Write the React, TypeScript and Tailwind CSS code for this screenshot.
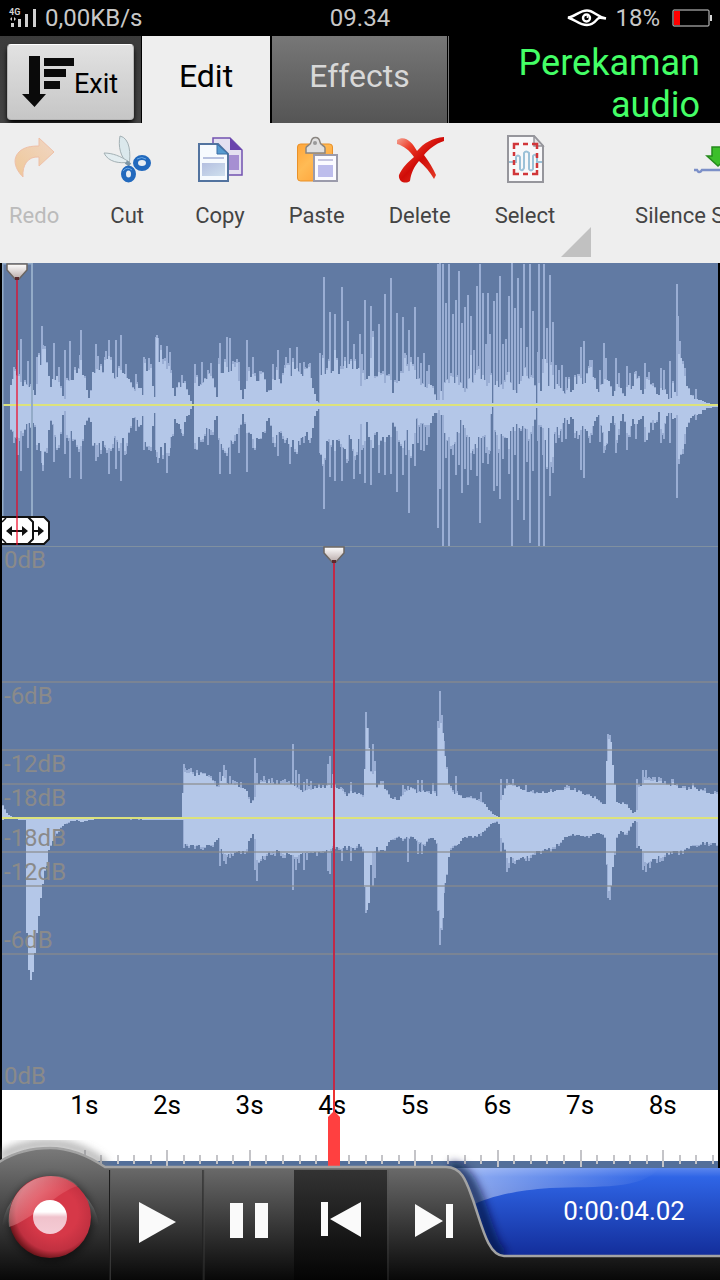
import type { ReactNode } from 'react'

type Sample = [x: number, up: number, down: number]

const WIDTH = 720

const OVERVIEW_BODY: Sample[] = [
  [2, 0, 0], [8, 0, 1], [10, 23, 20], [14, 30, 30], [17, 28, 28], [20, 20, 25], [27, 18, 20], [32, 16, 20],
  [34, 10, 16], [36, 25, 35], [38, 45, 42], [41, 48, 50], [44, 50, 45], [47, 35, 30], [50, 20, 15], [53, 28, 20],
  [56, 30, 38], [59, 18, 30], [62, 8, 10], [64, 6, 6], [66, 20, 25], [70, 26, 28], [74, 30, 32], [78, 34, 38],
  [81, 38, 35], [84, 22, 18], [88, 8, 10], [90, 14, 15], [92, 35, 36], [95, 38, 44], [99, 36, 36], [102, 30, 38],
  [105, 45, 34], [108, 50, 45], [111, 36, 35], [114, 24, 27], [118, 33, 36], [121, 35, 28], [124, 33, 38],
  [128, 28, 25], [131, 16, 15], [134, 12, 12], [137, 22, 20], [140, 16, 20], [142, 10, 10], [144, 36, 38],
  [149, 34, 42], [152, 22, 20], [154, 8, 8], [156, 60, 38], [158, 50, 52], [161, 42, 40], [165, 36, 46],
  [168, 34, 42], [171, 24, 28], [174, 10, 14], [177, 18, 22], [182, 22, 26], [186, 14, 12], [190, 3, 4],
  [192, 0, 1], [193, 25, 25], [196, 24, 42], [200, 20, 30], [204, 24, 26], [208, 28, 25], [212, 24, 22],
  [215, 10, 15], [217, 6, 8], [218, 35, 36], [222, 38, 40], [227, 38, 44], [231, 34, 32], [235, 40, 35],
  [238, 28, 26], [241, 12, 12], [243, 3, 6], [245, 28, 22], [250, 28, 30], [253, 25, 38], [258, 24, 32],
  [262, 30, 28], [266, 14, 14], [269, 12, 12], [272, 25, 28], [277, 30, 36], [280, 18, 22], [284, 32, 28],
  [287, 38, 44], [290, 30, 44], [293, 38, 38], [297, 34, 42], [301, 28, 38], [305, 35, 30], [310, 28, 38],
  [313, 12, 14], [316, 4, 5], [318, 2, 4], [319, 25, 40], [322, 40, 55], [325, 30, 46], [328, 40, 30],
  [331, 36, 38], [335, 48, 40], [338, 30, 30], [342, 30, 40], [345, 40, 50], [348, 40, 35], [352, 38, 42],
  [355, 40, 42], [358, 42, 36], [360, 18, 18], [363, 30, 40], [366, 28, 20], [369, 38, 38], [372, 55, 48],
  [374, 24, 25], [378, 30, 35], [382, 26, 34], [386, 26, 34], [390, 28, 34], [392, 12, 16], [395, 22, 20],
  [399, 24, 36], [403, 40, 34], [406, 36, 26], [410, 40, 48], [413, 34, 34], [416, 28, 12], [419, 20, 18],
  [423, 18, 16], [427, 14, 18], [430, 24, 20], [432, 14, 12], [435, 6, 8], [438, 4, 5], [439, 20, 14],
  [441, 5, 5], [443, 4, 12], [444, 20, 30], [448, 24, 36], [453, 24, 34], [458, 22, 30], [460, 20, 16],
  [464, 15, 26], [467, 14, 28], [470, 42, 48], [472, 20, 38], [476, 34, 38], [480, 28, 34], [484, 24, 26],
  [487, 22, 50], [490, 25, 10], [492, 2, 2], [493, 0, 0], [494, 22, 20], [498, 20, 36], [503, 18, 28],
  [508, 30, 36], [511, 15, 25], [516, 14, 20], [520, 25, 26], [524, 36, 22], [528, 26, 28], [531, 24, 22],
  [534, 18, 12], [536, 2, 3], [538, 22, 20], [541, 10, 15], [543, 48, 28], [546, 50, 58], [548, 18, 24],
  [551, 42, 60], [554, 16, 22], [557, 22, 26], [561, 18, 20], [565, 8, 12], [568, 22, 18], [571, 10, 8],
  [573, 24, 22], [578, 26, 30], [583, 22, 20], [587, 30, 28], [591, 38, 26], [595, 18, 15], [598, 12, 12],
  [601, 22, 20], [605, 28, 40], [609, 20, 22], [613, 8, 8], [616, 22, 30], [619, 20, 20], [623, 6, 8],
  [627, 20, 28], [631, 18, 16], [635, 28, 20], [639, 20, 15], [643, 8, 10], [646, 24, 34], [650, 18, 16],
  [654, 14, 18], [658, 8, 8], [661, 18, 26], [665, 12, 14], [669, 4, 5], [672, 18, 16], [676, 8, 10],
  [677, 60, 42], [680, 50, 48], [683, 28, 30], [688, 14, 16], [693, 6, 8], [700, 5, 8], [705, 2, 3],
  [712, 1, 2], [718, 1, 2],
]

const OVERVIEW_PEAKS: Sample[] = [
  [3, 0, 85], [14, 38, 38], [18, 55, 50], [21, 66, 66], [28, 44, 43], [37, 48, 45], [42, 79, 58], [43, 58, 63],
  [54, 62, 57], [59, 38, 37], [65, 55, 49], [70, 64, 73], [75, 37, 33], [80, 50, 40], [81, 75, 74], [96, 61, 56],
  [98, 49, 52], [106, 54, 43], [109, 65, 69], [116, 65, 64], [121, 70, 76], [126, 41, 49], [136, 31, 26],
  [144, 48, 45], [149, 47, 45], [156, 68, 45], [158, 67, 58], [163, 46, 46], [167, 59, 68], [170, 53, 43],
  [182, 30, 28], [195, 41, 44], [202, 43, 28], [208, 35, 40], [211, 42, 30], [219, 47, 35], [220, 62, 69],
  [227, 68, 48], [230, 67, 69], [235, 43, 36], [239, 43, 48], [247, 65, 67], [253, 48, 43], [260, 34, 27],
  [273, 41, 38], [278, 55, 51], [286, 48, 35], [290, 57, 59], [297, 58, 43], [300, 42, 40], [304, 43, 38],
  [310, 42, 38], [320, 52, 48], [324, 128, 104], [330, 93, 72], [335, 91, 76], [342, 118, 76], [348, 84, 56],
  [354, 61, 74], [360, 71, 69], [362, 51, 45], [365, 105, 78], [371, 99, 80], [379, 81, 68], [385, 111, 70],
  [391, 127, 69], [397, 92, 87], [403, 88, 70], [406, 50, 50], [409, 75, 108], [411, 48, 50], [415, 98, 61],
  [418, 48, 38], [421, 42, 45], [424, 52, 46], [427, 34, 40], [429, 40, 32], [438, 141, 123], [440, 142, 84],
  [443, 141, 141], [446, 102, 53], [449, 141, 141], [453, 91, 50], [456, 105, 70], [459, 134, 60], [462, 82, 88],
  [465, 98, 64], [468, 110, 80], [471, 89, 65], [474, 55, 49], [477, 119, 71], [480, 141, 118], [483, 112, 58],
  [486, 61, 48], [488, 112, 59], [490, 71, 46], [494, 104, 86], [497, 112, 81], [500, 129, 94], [503, 61, 54],
  [506, 66, 33], [509, 109, 69], [512, 142, 142], [515, 97, 50], [518, 127, 95], [521, 77, 26], [524, 141, 115],
  [527, 58, 57], [530, 141, 138], [533, 94, 66], [538, 53, 36], [539, 141, 141], [543, 46, 50], [544, 141, 141],
  [547, 77, 55], [550, 130, 91], [553, 83, 68], [556, 40, 38], [559, 35, 33], [562, 40, 37], [566, 28, 34],
  [575, 28, 33], [578, 31, 34], [581, 58, 65], [584, 64, 73], [590, 45, 38], [592, 45, 30], [600, 35, 37],
  [604, 62, 48], [606, 47, 40], [616, 47, 48], [619, 32, 30], [627, 39, 45], [630, 32, 32], [636, 34, 34],
  [645, 42, 37], [649, 33, 20], [653, 22, 25], [661, 37, 38], [664, 35, 34], [670, 44, 38], [677, 121, 93],
  [678, 89, 50], [680, 64, 45], [685, 37, 39], [696, 16, 15],
]

const DETAIL_BODY: Sample[] = [
  [2, 12, 2], [4, 8, 1], [7, 3, 1], [12, 1, 1], [24, 1, 2], [25, 1, 80], [26, 1, 115], [28, 1, 152], [29, 1, 160],
  [31, 1, 163], [33, 1, 145], [36, 1, 115], [40, 1, 80], [44, 1, 52], [48, 1, 32], [54, 1, 18], [60, 1, 9],
  [68, 1, 4], [76, 1, 2], [80, 1, 4], [88, 1, 2], [100, 1, 1], [181, 1, 2], [182, 25, 2], [184, 44, 26],
  [190, 44, 27], [195, 43, 27], [200, 45, 28], [206, 42, 28], [211, 38, 26], [215, 32, 24], [218, 30, 20],
  [219, 30, 28], [221, 45, 34], [226, 35, 36], [232, 34, 35], [238, 32, 34], [243, 30, 33], [246, 28, 30],
  [248, 18, 23], [250, 15, 20], [253, 17, 15], [254, 20, 20], [255, 33, 40], [257, 34, 45], [262, 35, 38],
  [268, 36, 34], [275, 34, 33], [284, 34, 35], [292, 34, 38], [296, 30, 38], [302, 26, 36], [308, 28, 35],
  [315, 30, 34], [322, 30, 33], [328, 32, 32], [333, 30, 28], [340, 28, 30], [345, 22, 28], [350, 26, 30],
  [355, 24, 28], [358, 26, 26], [362, 20, 30], [363, 40, 60], [365, 60, 78], [366, 90, 92], [368, 70, 85],
  [369, 50, 60], [371, 40, 36], [374, 46, 32], [376, 30, 30], [380, 34, 32], [383, 32, 33], [386, 26, 28],
  [390, 20, 22], [394, 18, 20], [398, 18, 18], [401, 22, 20], [405, 26, 20], [410, 30, 18], [417, 25, 22],
  [423, 26, 26], [428, 24, 20], [432, 26, 20], [436, 22, 25], [437, 48, 65], [438, 90, 92], [440, 95, 110],
  [442, 85, 100], [444, 62, 65], [447, 40, 50], [449, 30, 30], [453, 24, 26], [457, 24, 28], [462, 20, 20],
  [468, 20, 18], [475, 18, 18], [480, 16, 15], [484, 14, 12], [488, 8, 8], [492, 4, 5], [497, 1, 3], [499, 2, 8],
  [500, 18, 20], [503, 26, 26], [507, 33, 45], [510, 32, 40], [516, 32, 42], [522, 28, 40], [528, 26, 38],
  [533, 24, 34], [540, 25, 32], [550, 26, 30], [558, 28, 25], [565, 29, 19], [573, 28, 16], [580, 25, 18],
  [588, 22, 18], [595, 20, 16], [601, 14, 15], [604, 14, 18], [605, 40, 20], [607, 75, 70], [609, 82, 75],
  [611, 70, 60], [613, 40, 40], [616, 16, 18], [620, 14, 13], [625, 14, 16], [629, 9, 10], [633, 4, 3],
  [636, 8, 4], [638, 30, 28], [641, 34, 32], [645, 38, 46], [650, 36, 42], [656, 36, 40], [661, 36, 38],
  [666, 32, 36], [672, 34, 34], [680, 30, 32], [687, 28, 30], [692, 31, 26], [698, 28, 26], [705, 26, 24],
  [712, 24, 25], [718, 23, 27],
]

const DETAIL_PEAKS: Sample[] = [
  [184, 54, 30], [187, 48, 28], [189, 49, 24], [201, 46, 29], [220, 46, 48], [224, 53, 43], [226, 48, 46],
  [230, 42, 40], [235, 37, 35], [241, 36, 35], [255, 60, 52], [257, 45, 63], [264, 42, 41], [272, 40, 37],
  [285, 39, 40], [293, 74, 72], [296, 48, 52], [299, 44, 45], [304, 36, 52], [307, 39, 42], [311, 37, 35],
  [328, 54, 53], [330, 62, 56], [333, 44, 30], [342, 30, 43], [351, 36, 43], [366, 106, 95], [368, 90, 80],
  [373, 74, 68], [375, 57, 60], [381, 37, 30], [403, 33, 20], [408, 32, 44], [418, 38, 36], [422, 38, 36],
  [433, 35, 20], [438, 97, 93], [440, 127, 127], [442, 103, 112], [444, 77, 75], [447, 48, 50], [456, 42, 28],
  [481, 26, 18], [501, 39, 34], [507, 39, 54], [513, 39, 45], [526, 33, 43], [608, 84, 80], [610, 83, 82],
  [637, 39, 30], [643, 48, 52], [646, 48, 54], [650, 40, 50], [660, 40, 44], [672, 39, 36],
]

const DB_LINES = [136, 204, 238, 306, 340, 408]

const DB_LABELS = [
  { top: 2, label: '0dB' },
  { top: 138, label: '-6dB' },
  { top: 206, label: '-12dB' },
  { top: 240, label: '-18dB' },
  { top: 280, label: '-18dB' },
  { top: 314, label: '-12dB' },
  { top: 382, label: '-6dB' },
  { top: 518, label: '0dB' },
]

const SECONDS = ['1s', '2s', '3s', '4s', '5s', '6s', '7s', '8s']

// Repeatable noise in 0..1, so that the wave keeps its shape between renders
function noise(n: number) {
  const v = Math.sin(n * 127.1) * 43758.5453
  return v - Math.floor(v)
}

function jitter(height: number, spread: number, seed: number) {
  return Math.round(height + (height > 60 ? 0 : height) * spread * (noise(seed) - 0.4))
}

// One column every two pixels, mirrored round the mid line
function wavePath(samples: Sample[], mid: number, spread: number) {
  let upper = ''
  let lower = ''
  let i = 0
  for (let x = 2; x < WIDTH - 2; x += 2) {
    while (i < samples.length - 2 && samples[i + 1][0] <= x) i++
    const [x0, u0, d0] = samples[i]
    const [x1, u1, d1] = samples[i + 1]
    const t = Math.min(1, Math.max(0, (x - x0) / (x1 - x0)))
    const top = mid - jitter(u0 + (u1 - u0) * t, spread, x)
    const bottom = mid + jitter(d0 + (d1 - d0) * t, spread, x + 999)
    upper += `L${x} ${top}H${x + 2}`
    lower = `L${x + 2} ${bottom}H${x}` + lower
  }
  return `M2 ${mid}${upper}${lower}Z`
}

function peakPath(samples: Sample[], mid: number) {
  return samples.map(([x, up, down]) => `M${x - 1} ${mid - up}h2V${mid + down}h-2Z`).join('')
}

type WaveProps = { body: Sample[]; peaks: Sample[]; mid: number; rough: number; inner: number }

function Wave({ body, peaks, mid, rough, inner }: WaveProps) {
  return (
    <g shapeRendering="crispEdges">
      <path d={wavePath(body, mid, rough)} fill="#9aaed4" />
      <path d={peakPath(peaks, mid)} fill="#9aaed4" />
      <path d={wavePath(body, mid, inner)} fill="#b4c7e8" />
      <rect x="2" y={mid - 1} width="716" height="2" fill="#dce27c" />
    </g>
  )
}

function MarkerHead({ x, y }: { x: number; y: number }) {
  return (
    <g transform={`translate(${x} ${y})`}>
      <path d="M-10 1H10V7L2 16H-2L-10 7Z" fill="url(#marker)" stroke="#6b6663" strokeWidth="1.5" />
      <path d="M-2 14H2V17H-2Z" fill="#5b2a2e" />
    </g>
  )
}

function StatusBar() {
  return (
    <div className="flex h-9 items-center bg-black px-2 text-2xl text-[#c8c8c8]">
      <div className="flex flex-1 items-center gap-2">
        <svg width="29" height="20" viewBox="0 0 29 20" fill="#d0d0d0" aria-hidden="true">
          <text x="1" y="7" fontSize="9" fontWeight="700" fontFamily="Roboto">4G</text>
          <path d="M3 15h3v4H3zM10 11h3v8h-3zM17 6h3v13h-3zM25 1h3v18h-3z" />
          <path d="M2 11l2-2v4zM6 9l2 2-2 2z" />
        </svg>
        <span>0,00KB/s</span>
      </div>
      <span>09.34</span>
      <div className="flex flex-1 items-center justify-end gap-2">
        <svg width="40" height="18" viewBox="0 0 40 18" fill="none" stroke="#fff" strokeWidth="2.4" aria-hidden="true">
          <path d="M1 8.500C8 8 12 1.500 20 1.500c7 0 9 6 19 8-6-1-7-1-8.500.5C28 13 25 16 20 16 12 16 9 11 1 8.500z" />
          <circle cx="19.500" cy="9" r="3.500" />
          <circle cx="20.500" cy="8" r="1" fill="#fff" stroke="none" />
        </svg>
        <span>18%</span>
        <svg className="ml-1" width="40" height="18" viewBox="0 0 40 18" aria-hidden="true">
          <rect x="1" y="1" width="36" height="16" rx="1" fill="none" stroke="#d6d6d6" />
          <path d="M38 6h2v6h-2z" fill="#d6d6d6" />
          <path d="M2 2h6v14H2z" fill="#f00" />
        </svg>
      </div>
    </div>
  )
}

function Header() {
  return (
    <header className="flex h-[87px] bg-black">
      <div className="w-[141px] bg-linear-to-b from-[#3b3b3b] to-[#454545] px-[7px] pt-2">
        <button className="flex h-[76px] w-full items-center rounded-sm border border-[#b5b5b5] border-t-white bg-linear-to-b from-[#e2e2e2] to-[#c6c6c6] pl-3.5 text-[27px] text-black shadow-md shadow-black">
          <svg width="52" height="54" viewBox="0 0 52 54" aria-hidden="true">
            <path d="M7 1h11v38h6L12.500 52 0 39h7zM22 3h30v8H22zM22 14h22v8H22zM22 26h16v8H22z" fill="#0a0a0a" />
          </svg>
          <span className="pt-1">Exit</span>
        </button>
      </div>
      <nav className="flex pl-px text-[32px]">
        <button className="w-32 bg-[#eee] pb-2 text-black">Edit</button>
        <button className="ml-0.5 w-[175px] bg-linear-to-b from-[#777] to-[#555] pb-2 text-[#d8d8d8]">Effects</button>
        <div className="ml-px w-px bg-[#777]" />
      </nav>
      <h1 className="ml-auto w-60 pt-1.5 pr-5 text-right text-4xl leading-[42px] text-[#4f6]">Perekaman audio</h1>
    </header>
  )
}

function RedoIcon() {
  return (
    <svg width="48" height="48" viewBox="0 0 48 48" fill="url(#redo)" stroke="#eec0a8" strokeWidth="1" aria-hidden="true">
      <path d="M29 3L44 17 29 31V22C18 21 12 30 13 42 5 34 2 24 9 17c5-5 12-6 20-6z" />
    </svg>
  )
}

function CutIcon() {
  return (
    <svg width="48" height="48" viewBox="0 0 48 48" aria-hidden="true">
      <path d="M17 1c10 2 11 18 9 29C17 22 15 11 17 1z" fill="#dbe8ec" stroke="#a3b0b4" />
      <path d="M1 18c8 0 17 3 25 9-9 2-21 0-25-9z" fill="#e3edf0" stroke="#a3b0b4" />
      <path d="M23 27l4 3" stroke="#7d96a5" strokeWidth="4" />
      <ellipse cx="39" cy="28" rx="6.500" ry="5.500" fill="#e8edf2" stroke="#2269bd" strokeWidth="5" />
      <ellipse cx="25.500" cy="39" rx="5" ry="6" fill="#e8edf2" stroke="#2269bd" strokeWidth="5" />
      <path d="M34 24q5-3 9 0M20 36q4-5 9-1" fill="none" stroke="#67a7e5" />
    </svg>
  )
}

function CopyIcon() {
  return (
    <svg width="48" height="48" viewBox="0 0 48 48" aria-hidden="true">
      <path d="M17 3H34L46 15V40H17z" fill="#e4e0f0" stroke="#7151b0" strokeWidth="1.500" />
      <path d="M33 20h10v15H33z" fill="#a68fd2" />
      <path d="M34 3V15H46z" fill="#6a43ad" />
      <path d="M3 9H22L32 19V46H3z" fill="#f6fafe" stroke="#52739f" strokeWidth="2" />
      <path d="M6 28h23v13H6z" fill="url(#sheet)" />
      <path d="M7 23h21" stroke="#b7c1df" strokeWidth="2" />
      <path d="M21 9v10h11z" fill="#569bd0" stroke="#3d6ea5" />
    </svg>
  )
}

function PasteIcon() {
  return (
    <svg width="48" height="48" viewBox="0 0 48 48" aria-hidden="true">
      <rect x="4.500" y="9" width="35" height="37" rx="3" fill="url(#board)" stroke="#e99128" />
      <path d="M13 18v-5c0-3 5-2 5-6 1-6 8-6 9 0 0 4 5 3 5 6v5z" fill="#e0e0e0" stroke="#8a8580" strokeWidth="1.500" />
      <circle cx="22" cy="8" r="2" fill="#999" />
      <path d="M21 20H44V46H21z" fill="#fbfbff" stroke="#9b9bab" strokeWidth="2" />
      <path d="M25 25h15" stroke="#c7c7e0" strokeWidth="2" />
      <path d="M25 30h15v12H25z" fill="#bdbdec" />
    </svg>
  )
}

function DeleteIcon() {
  return (
    <svg width="48" height="48" viewBox="0 0 48 48" aria-hidden="true">
      <path d="M1 5C9 0 16 7 21 16 28 8 36 3 48 2v4C39 9 33 14 28 20c5 7 9 13 12 20l-2 4C34 37 29 31 23 26c-5 6-8 12-9 20-5 4-12 0-11-6 3-7 9-13 15-18C13 15 8 11 1 9z" fill="url(#cross)" />
    </svg>
  )
}

function SelectIcon() {
  return (
    <svg width="48" height="48" viewBox="0 0 48 48" fill="none" aria-hidden="true">
      <path d="M7 1H33L42 11V47H7z" fill="#f8f8fa" stroke="#96969c" strokeWidth="2" />
      <path d="M33 1V11H42z" fill="#e2e2e4" stroke="#96969c" strokeWidth="1.500" />
      <path d="M8 27h7v-5q2-3 4 0v12q2 3 4-1V18q2-3 5 0v16q2 3 4 0V21q2-3 4 1v5h5" stroke="#9cc1d8" strokeWidth="2" />
      <path d="M13 14V9h5M22 9h5M31 9h5v5M36 18v5M36 28v5M36 35v4h-5M27 39h-5M18 39h-5v-5M13 30v-5M13 21v-4" stroke="#d1363b" strokeWidth="2.500" />
    </svg>
  )
}

function SilenceIcon() {
  return (
    <svg width="48" height="48" viewBox="0 0 48 48" aria-hidden="true">
      <path d="M0 35h3q2 4 5 0h40" fill="none" stroke="#7c90c8" strokeWidth="2.500" />
      <path d="M18 12h12v9h5L24 31 13 21h5z" fill="#3cbf2a" stroke="#258a1c" strokeWidth="1.500" />
    </svg>
  )
}

function Tool({ label, icon, disabled = false }: { label: string; icon: ReactNode; disabled?: boolean }) {
  return (
    <button
      disabled={disabled}
      className="flex shrink-0 flex-col items-center gap-[17px] px-[22px] pt-3 text-[22px] leading-8 whitespace-nowrap text-[#444] disabled:text-[#bbb]"
    >
      {icon}
      {label}
    </button>
  )
}

function Toolbar() {
  return (
    <div className="flex h-35 overflow-hidden bg-[#eee]">
      <div className="-ml-[13px] flex">
        <Tool label="Redo" icon={<RedoIcon />} disabled />
        <Tool label="Cut" icon={<CutIcon />} />
        <Tool label="Copy" icon={<CopyIcon />} />
        <Tool label="Paste" icon={<PasteIcon />} />
        <Tool label="Delete" icon={<DeleteIcon />} />
        <Tool label="Select" icon={<SelectIcon />} />
        <svg className="-ml-4 mb-1.5 shrink-0 self-end" width="30" height="30" viewBox="0 0 30 30" aria-hidden="true">
          <path d="M30 0V30H0z" fill="#c1c1c1" />
        </svg>
        <div className="ml-[22px] flex">
          <Tool label="Silence Selection" icon={<SilenceIcon />} />
        </div>
      </div>
    </div>
  )
}

function Overview() {
  return (
    <svg className="block h-[283px] w-full bg-[#617aa3]" viewBox="2 0 716 283" preserveAspectRatio="none">
      <Wave body={OVERVIEW_BODY} peaks={OVERVIEW_PEAKS} mid={142} rough={0.6} inner={0.4} />
      <path d="M2.500 0V253M2 .5H32M32 0V253" stroke="#93abc8" strokeWidth="2" fill="none" />
      <g stroke="#111" strokeWidth="2">
        <path d="M20 254H44L49 259V276L44 281H20z" fill="#fff" />
        <path d="M34 268h5" />
        <path d="M38 263l6 5-6 5z" fill="#111" stroke="none" />
        <path d="M0 254H28L33 259V276L28 281H0z" fill="#fff" />
        <path d="M2 259l4-4M2 276l4 4" strokeWidth="1.500" />
        <path d="M9 268h16" />
        <path d="M12 263v10l-6-5zM22 263v10l6-5z" fill="#111" stroke="none" />
      </g>
      <path d="M17 15V282" stroke="#f00020" strokeOpacity=".6" strokeWidth="2" />
      <MarkerHead x={17} y={0} />
    </svg>
  )
}

function Detail() {
  return (
    <div className="relative">
      <svg className="block h-[544px] w-full bg-[#617aa3]" viewBox="2 0 716 544" preserveAspectRatio="none">
        <Wave body={DETAIL_BODY} peaks={DETAIL_PEAKS} mid={272} rough={0.25} inner={0.08} />
        <path d="M2 .5H718" stroke="#8090a0" />
        {DB_LINES.map((y) => (
          <path key={y} d={`M2 ${y}H718`} stroke="#8a8a8a" strokeOpacity=".6" strokeWidth="2" />
        ))}
        <path d="M334 15V544" stroke="#c02a48" strokeWidth="2" />
        <MarkerHead x={334} y={0} />
      </svg>
      {DB_LABELS.map(({ top, label }) => (
        <span key={top} className="absolute left-0.5 text-2xl leading-6 text-[#8a8a8a]" style={{ top }}>
          {label}
        </span>
      ))}
    </div>
  )
}

function Ruler() {
  const ticks = Array.from({ length: 43 }, (_, i) => i + 1)
  return (
    <div className="relative bg-white">
      <div className="grid grid-cols-8 pr-3.5 pl-[41px] text-center text-[26px] leading-[30px] text-black">
        {SECONDS.map((label) => (
          <span key={label}>{label}</span>
        ))}
      </div>
      <svg className="block h-12 w-full" viewBox="2 30 716 48" preserveAspectRatio="none">
        <path d="M2 71H718V78H2z" fill="#536f9a" />
        {ticks.map((i) => (
          <path
            key={i}
            d={i % 5 === 0 ? 'M0 60V77' : 'M0 65V74'}
            transform={`translate(${Math.round(2 + i * 16.53)} 0)`}
            stroke="#c4c4c8"
            strokeWidth="2"
          />
        ))}
      </svg>
      <svg className="absolute inset-0 h-full w-full" viewBox="2 0 716 78" preserveAspectRatio="none">
        <path d="M334 0V22" stroke="#e33" strokeWidth="2" />
        <path d="M334 21L340 27V77H328V27z" fill="#ff4040" />
      </svg>
    </div>
  )
}

function Transport() {
  return (
    <footer className="relative -mt-7 flex h-35">
      {/* Console body */}
      <svg className="absolute inset-0 h-full w-full" aria-hidden="true">
        <rect x="440" y="28" width="4000" height="90" fill="url(#display)" />
        <path d="M450 28H660C640 50 600 46 550 48 510 51 490 57 470 66z" fill="url(#gloss)" />
        <path d="M450 28C464 30 470 42 478 62 488 90 492 112 504 116" fill="none" stroke="#06103a" strokeOpacity=".7" strokeWidth="14" filter="url(#soft)" />
        <path d="M0 17C15 7 35 4 50 4 72 4 92 13 106 26" fill="none" stroke="#777" strokeOpacity=".7" strokeWidth="7" filter="url(#soft)" />
        <path
          d="M-4 24C15 11 35 8 50 8 72 8 90 17 105 27H446C463 27 467 44 473 60 482 86 488 116 504 116H4400V150H-4z"
          fill="url(#console)"
          stroke="#a3a3a3"
          strokeWidth="2.500"
        />
        <path d="M294 30H387V140H294z" fill="url(#pressed)" />
        <path d="M109.500 30V140M203 30V140" stroke="#1c1c1c" strokeWidth="1" />
        <path d="M110.500 30V140M204 30V140M388 30V140" stroke="#555" strokeOpacity=".5" />
      </svg>

      <button aria-label="Record" className="relative w-[109px]">
        <svg width="109" height="140" viewBox="0 0 109 140" aria-hidden="true">
          <path d="M5 86A46 50 0 0 1 96 86" fill="none" stroke="url(#rim)" strokeWidth="6" />
          <circle cx="51" cy="79" r="42" fill="#000" fillOpacity=".5" filter="url(#soft)" />
          <circle cx="50" cy="77" r="41" fill="url(#ball)" />
          <path d="M9 87C6 55 28 36 51 36c12 0 20 3 27 10C60 50 32 80 9 87z" fill="url(#shine)" />
          <circle cx="50" cy="77" r="17" fill="url(#dot)" />
        </svg>
      </button>
      <button aria-label="Play" className="relative w-[94px]">
        <svg width="94" height="140" viewBox="109 0 94 140" fill="#fafafa" aria-hidden="true">
          <path d="M139 62L176 82 139 103z" />
        </svg>
      </button>
      <button aria-label="Pause" className="relative w-[91px]">
        <svg width="91" height="140" viewBox="203 0 91 140" fill="#fafafa" aria-hidden="true">
          <path d="M230 63h13v35h-13zM255 63h13v35h-13z" />
        </svg>
      </button>
      <button aria-label="Skip to start" className="relative w-[93px]">
        <svg width="93" height="140" viewBox="294 0 93 140" fill="#fafafa" aria-hidden="true">
          <path d="M321 62h7v34h-7zM361 62V97L330 79z" />
        </svg>
      </button>
      <button aria-label="Skip to end" className="relative w-[93px]">
        <svg width="93" height="140" viewBox="387 0 93 140" fill="#fafafa" aria-hidden="true">
          <path d="M415 64L443 81 415 97zM446 64h7v34h-7z" />
        </svg>
      </button>
      <div className="relative flex-1 pt-14 pr-[35px] text-right text-[26px] leading-[30px] text-white">0:00:04.02</div>
    </footer>
  )
}

function Gradients() {
  return (
    <svg className="absolute h-0 w-0" aria-hidden="true">
      <defs>
        <filter id="soft" x="-30%" y="-30%" width="160%" height="160%">
          <feGaussianBlur stdDeviation="4" />
        </filter>
        <linearGradient id="marker" x1="0" y1="0" x2="0" y2="1">
          <stop offset="0" stopColor="#fff" />
          <stop offset="1" stopColor="#b8aaa8" />
        </linearGradient>
        <linearGradient id="redo" x1="0" y1="1" x2="1" y2="0">
          <stop offset="0" stopColor="#efc898" />
          <stop offset="1" stopColor="#f0d6c4" />
        </linearGradient>
        <linearGradient id="sheet" x1="0" y1="0" x2="1" y2="1">
          <stop offset="0" stopColor="#b4bfe0" />
          <stop offset="1" stopColor="#cfe0ee" />
        </linearGradient>
        <linearGradient id="board" x1="0" y1="0" x2="1" y2="1">
          <stop offset="0" stopColor="#ffa53a" />
          <stop offset=".4" stopColor="#ffbb55" />
          <stop offset="1" stopColor="#ff9b30" />
        </linearGradient>
        <linearGradient id="cross" x1="0" y1="0" x2="1" y2="1">
          <stop offset="0" stopColor="#f4a797" />
          <stop offset=".25" stopColor="#ec3a26" />
          <stop offset=".5" stopColor="#d00c08" />
          <stop offset="1" stopColor="#ea4a30" />
        </linearGradient>
        <linearGradient id="console" gradientUnits="userSpaceOnUse" x1="0" y1="8" x2="0" y2="140">
          <stop offset="0" stopColor="#7a7a7a" />
          <stop offset=".2" stopColor="#646464" />
          <stop offset=".65" stopColor="#303030" />
          <stop offset="1" stopColor="#080808" />
        </linearGradient>
        <linearGradient id="pressed" x1="0" y1="0" x2="0" y2="1">
          <stop offset="0" stopColor="#333" />
          <stop offset="1" stopColor="#040404" />
        </linearGradient>
        <linearGradient id="display" x1="0" y1="0" x2="0" y2="1">
          <stop offset="0" stopColor="#5b86ee" />
          <stop offset=".1" stopColor="#2f65e6" />
          <stop offset="1" stopColor="#122c98" />
        </linearGradient>
        <linearGradient id="gloss" x1="0" y1="0" x2="1" y2="0">
          <stop offset="0" stopColor="#fff" stopOpacity=".5" />
          <stop offset="1" stopColor="#fff" stopOpacity="0" />
        </linearGradient>
        <linearGradient id="rim" x1="0" y1="0" x2="0" y2="1">
          <stop offset="0" stopColor="#d0d0d0" />
          <stop offset="1" stopColor="#666" stopOpacity="0" />
        </linearGradient>
        <radialGradient id="ball" cx=".55" cy=".45" r=".58">
          <stop offset=".5" stopColor="#d63848" />
          <stop offset=".8" stopColor="#c03040" />
          <stop offset="1" stopColor="#5c1014" />
        </radialGradient>
        <linearGradient id="shine" x1="0" y1="0" x2=".8" y2=".6">
          <stop offset="0" stopColor="#fff" stopOpacity=".65" />
          <stop offset="1" stopColor="#f99" stopOpacity=".1" />
        </linearGradient>
        <linearGradient id="dot" x1="0" y1="0" x2="0" y2="1">
          <stop offset=".35" stopColor="#fff" />
          <stop offset=".5" stopColor="#f0c2cc" />
          <stop offset="1" stopColor="#f5ccd5" />
        </linearGradient>
      </defs>
    </svg>
  )
}

export default function App() {
  return (
    <div className="relative flex min-h-screen flex-col overflow-hidden bg-black font-['Roboto',sans-serif]">
      <Gradients />
      <StatusBar />
      <Header />
      <Toolbar />
      <main className="border-x-2 border-black">
        <Overview />
        <Detail />
        <Ruler />
      </main>
      <Transport />
    </div>
  )
}
